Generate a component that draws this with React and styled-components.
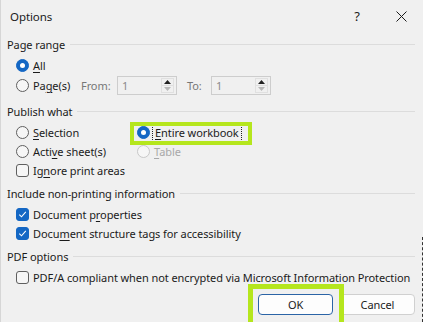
import React from 'react';
import styled, { createGlobalStyle } from 'styled-components';

const Global = createGlobalStyle`
  html, body { margin: 0; padding: 0; background: #f0f0f0; }
  body { font-family: "Noto Sans", "Segoe UI", sans-serif; }
`;

const ACCENT = '#1467c4';
const LIME = '#b5e61d';

const Dialog = styled.div`
  position: relative;
  width: 423px;
  height: 322px;
  box-sizing: border-box;
  background: #f0f0f0;
  color: #1b1b1b;
  font-family: "Noto Sans", "Segoe UI", sans-serif;
  font-size: 11px;
  letter-spacing: -0.08px;
  border-left: 1px solid #d6d6d6;
  overflow: hidden;
  display: flex;
  flex-direction: column;
`;

const TitleBar = styled.div`
  height: 32px;
  display: flex;
  align-items: center;
  padding-left: 9px;
  font-size: 11.5px;
  flex-shrink: 0;
`;

const Title = styled.div`
  flex: 1;
`;

const TitleButton = styled.div`
  width: 44px;
  height: 32px;
  display: flex;
  align-items: center;
  justify-content: center;
  font-size: 13px;
  color: #1b1b1b;
`;

const Body = styled.div`
  display: flex;
  flex-direction: column;
  padding-left: 6px;
`;

const GroupHeader = styled.div`
  height: 16px;
  line-height: 16px;
  display: flex;
  align-items: center;
  gap: 5px;
  margin-top: ${p => p.$top}px;
  margin-right: 8px;
  white-space: nowrap;
`;

const HeaderLine = styled.div`
  flex: 1;
  height: 0;
  border-top: 1px solid #dcdcdc;
  margin-top: -2px;
`;

const Rows = styled.div`
  display: flex;
  flex-direction: column;
  margin-top: 3px;
  padding-left: 9px;
`;

const Row = styled.div`
  height: ${p => p.$h || 19}px;
  display: flex;
  align-items: center;
  white-space: nowrap;
`;

const PageGrid = styled.div`
  height: 21px;
  display: grid;
  grid-template-columns: 65px 36px 60px 34px 60px;
  align-items: center;
  white-space: nowrap;
`;

const PublishGrid = styled.div`
  display: grid;
  grid-template-columns: 121px auto;
  grid-auto-rows: 19px;
  align-items: center;
  white-space: nowrap;
`;

const Option = styled.label`
  display: flex;
  align-items: center;
  gap: 4px;
  color: ${p => (p.$disabled ? '#a8a8a8' : '#1b1b1b')};
`;

const RadioDot = styled.span`
  width: 13px;
  height: 13px;
  box-sizing: border-box;
  border-radius: 50%;
  flex-shrink: 0;
  display: flex;
  align-items: center;
  justify-content: center;
  background: ${p => (p.$checked ? ACCENT : '#f6f6f6')};
  border: 1px solid ${p => (p.$checked ? ACCENT : p.$disabled ? '#c8c8c8' : '#5f5f5f')};
  &::after {
    content: '';
    display: ${p => (p.$checked ? 'block' : 'none')};
    width: 5px;
    height: 5px;
    border-radius: 50%;
    background: #fff;
  }
`;

const Box = styled.span`
  width: 13px;
  height: 13px;
  box-sizing: border-box;
  border-radius: 3px;
  flex-shrink: 0;
  display: flex;
  align-items: center;
  justify-content: center;
  background: ${p => (p.$checked ? ACCENT : '#f6f6f6')};
  border: 1px solid ${p => (p.$checked ? ACCENT : '#5f5f5f')};
`;

const Focus = styled.span`
  outline: 1px dotted #222;
  outline-offset: 1px;
  padding: 0 1px;
`;

const U = styled.span`
  text-decoration: underline;
  text-underline-offset: 2px;
`;

const DimLabel = styled.span`
  color: #777;
  padding-left: ${p => p.$pl || 0}px;
`;

const Spin = styled.div`
  width: 60px;
  height: 19px;
  box-sizing: border-box;
  border: 1px solid #cdcdcd;
  display: flex;
  background: #f0f0f0;
`;

const SpinValue = styled.div`
  flex: 1;
  padding-left: 4px;
  line-height: 17px;
  color: #8a8a8a;
`;

const SpinButtons = styled.div`
  width: 13px;
  margin: 1px 2px 1px 0;
  display: flex;
  flex-direction: column;
  border: 1px solid #e0e0e0;
  box-sizing: border-box;
`;

const SpinHalf = styled.div`
  flex: 1;
  display: flex;
  align-items: center;
  justify-content: center;
  border-top: ${p => (p.$down ? '1px solid #e0e0e0' : 'none')};
`;

const Buttons = styled.div`
  display: flex;
  justify-content: flex-end;
  gap: 7px;
  margin-top: 7px;
  margin-right: 8px;
`;

const Button = styled.div`
  width: 75px;
  height: 21px;
  box-sizing: border-box;
  border-radius: 4px;
  background: #fdfdfd;
  border: 1px solid ${p => (p.$primary ? '#2b64a6' : '#d0d0d0')};
  display: flex;
  align-items: center;
  justify-content: center;
  font-size: 11px;
`;

const Highlight = styled.div`
  position: absolute;
  box-sizing: border-box;
  border: ${p => p.$w}px solid ${LIME};
  left: ${p => p.$x}px;
  top: ${p => p.$y}px;
  width: ${p => p.$width}px;
  height: ${p => p.$height}px;
  pointer-events: none;
`;

const EdgeDash = styled.div`
  position: absolute;
  left: 421px;
  top: 237px;
  bottom: 0;
  border-left: 1px dashed #333;
`;

const Radio = ({ checked, disabled, children }) => (
  <Option $disabled={disabled}>
    <RadioDot $checked={checked} $disabled={disabled} />
    <span>{children}</span>
  </Option>
);

const Check = ({ checked, children }) => (
  <Option>
    <Box $checked={checked}>
      {checked && (
        <svg width="9" height="9" viewBox="0 0 9 9">
          <path d="M1.3 4.7 L3.5 6.8 L7.8 1.8" fill="none" stroke="#fff" strokeWidth="1.1" />
        </svg>
      )}
    </Box>
    <span>{children}</span>
  </Option>
);

const Spinner = ({ value }) => (
  <Spin>
    <SpinValue>{value}</SpinValue>
    <SpinButtons>
      <SpinHalf>
        <svg width="7" height="4" viewBox="0 0 7 4"><path d="M0 4 L3.5 0 L7 4 Z" fill="#222" /></svg>
      </SpinHalf>
      <SpinHalf $down>
        <svg width="7" height="4" viewBox="0 0 7 4"><path d="M0 0 L7 0 L3.5 4 Z" fill="#b8b8b8" /></svg>
      </SpinHalf>
    </SpinButtons>
  </Spin>
);

const Header = ({ top, children }) => (
  <GroupHeader $top={top}>
    <span>{children}</span>
    <HeaderLine />
  </GroupHeader>
);

export default function App() {
  return (
    <>
      <Global />
      <Dialog>
        <TitleBar>
          <Title>Options</Title>
          <TitleButton>?</TitleButton>
          <TitleButton>
            <svg width="11" height="11" viewBox="0 0 11 11">
              <path d="M0.5 0.5 L10.5 10.5 M10.5 0.5 L0.5 10.5" stroke="#1b1b1b" strokeWidth="1" />
            </svg>
          </TitleButton>
        </TitleBar>
        <Body>
          <Header top={5}>Page range</Header>
          <Rows>
            <Row>
              <Radio checked><U>A</U>ll</Radio>
            </Row>
            <PageGrid>
              <Radio>Pa<U>g</U>e(s)</Radio>
              <DimLabel>From:</DimLabel>
              <Spinner value="1" />
              <DimLabel $pl={10}>To:</DimLabel>
              <Spinner value="1" />
            </PageGrid>
          </Rows>

          <Header top={8}>Publish what</Header>
          <Rows>
            <PublishGrid>
              <Radio><U>S</U>election</Radio>
              <Radio checked><Focus><U>E</U>ntire workbook</Focus></Radio>
              <Radio>Acti<U>v</U>e sheet(s)</Radio>
              <Radio disabled><U>T</U>able</Radio>
              <Check>Ig<U>n</U>ore print areas</Check>
            </PublishGrid>
          </Rows>

          <Header top={6}>Include non-printing information</Header>
          <Rows>
            <Row><Check checked>Document p<U>r</U>operties</Check></Row>
            <Row><Check checked>Docu<U>m</U>ent structure tags for accessibility</Check></Row>
          </Rows>

          <Header top={6}>PDF options</Header>
          <Rows>
            <Row><Check>PDF/A compliant when not encrypted via Microsoft Information Protection</Check></Row>
          </Rows>

          <Buttons>
            <Button $primary>OK</Button>
            <Button>Cancel</Button>
          </Buttons>
        </Body>
        <Highlight $x={129} $y={122} $width={122} $height={23} $w={4} />
        <Highlight $x={247} $y={284} $width={96} $height={50} $w={5} />
        <EdgeDash />
      </Dialog>
    </>
  );
}
